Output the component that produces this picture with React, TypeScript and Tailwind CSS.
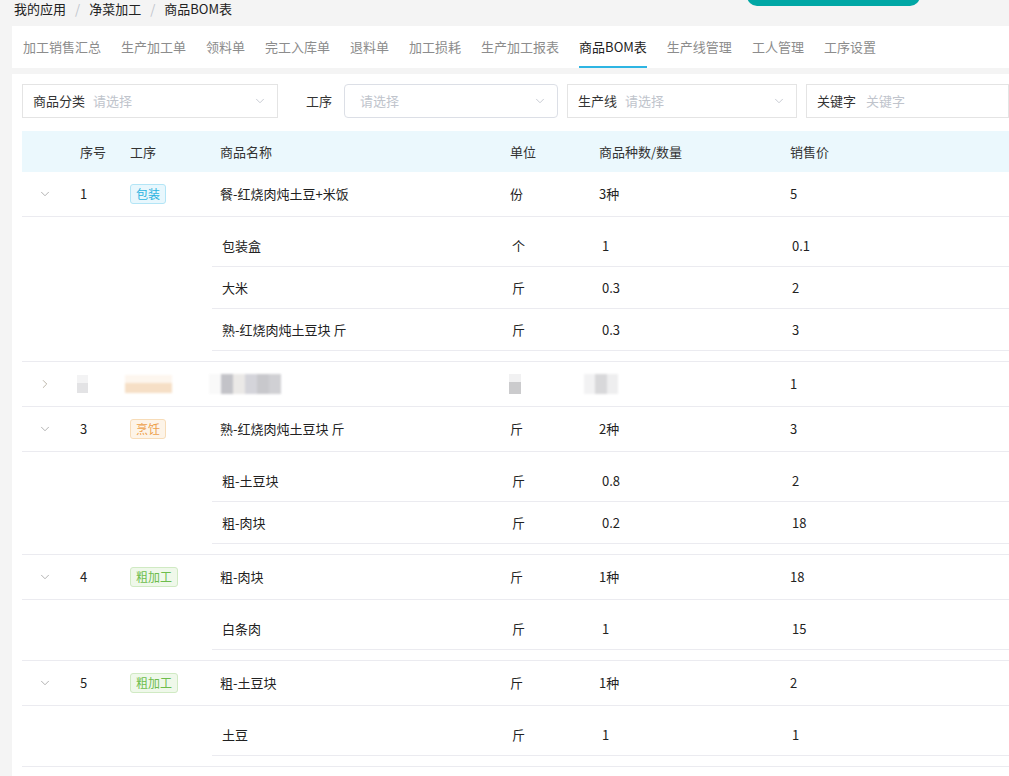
import { ChevronDown, ChevronRight } from 'lucide-react';

const TABS = ['加工销售汇总', '生产加工单', '领料单', '完工入库单', '退料单', '加工损耗', '生产加工报表', '商品BOM表', '生产线管理', '工人管理', '工序设置'];

type Sub = { name: string; unit: string; qty: string; price: string };
type Row = { no: string; tag: 'pack' | 'cook' | 'rough'; tagText: string; name: string; unit: string; kinds: string; price: string; subs: Sub[] };

const TAG_CLASS = {
  pack: 'bg-[#e8f7fd] border-[#b3e5f6] text-[#2bb3e0]',
  cook: 'bg-[#fdf4e8] border-[#f7dcb8] text-[#eda04a]',
  rough: 'bg-[#eff8ea] border-[#d0eac3] text-[#6dbd4c]',
};

const ROWS: Row[] = [
  {
    no: '1', tag: 'pack', tagText: '包装', name: '餐-红烧肉炖土豆+米饭', unit: '份', kinds: '3种', price: '5',
    subs: [
      { name: '包装盒', unit: '个', qty: '1', price: '0.1' },
      { name: '大米', unit: '斤', qty: '0.3', price: '2' },
      { name: '熟-红烧肉炖土豆块 斤', unit: '斤', qty: '0.3', price: '3' },
    ],
  },
  {
    no: '3', tag: 'cook', tagText: '烹饪', name: '熟-红烧肉炖土豆块 斤', unit: '斤', kinds: '2种', price: '3',
    subs: [
      { name: '粗-土豆块', unit: '斤', qty: '0.8', price: '2' },
      { name: '粗-肉块', unit: '斤', qty: '0.2', price: '18' },
    ],
  },
  {
    no: '4', tag: 'rough', tagText: '粗加工', name: '粗-肉块', unit: '斤', kinds: '1种', price: '18',
    subs: [{ name: '白条肉', unit: '斤', qty: '1', price: '15' }],
  },
  {
    no: '5', tag: 'rough', tagText: '粗加工', name: '粗-土豆块', unit: '斤', kinds: '1种', price: '2',
    subs: [{ name: '土豆', unit: '斤', qty: '1', price: '1' }],
  },
];

const COLS = 'grid grid-cols-[58px_50px_90px_290px_89px_191px_1fr] items-center';

function Select({ label, width }: { label: string; width: string }) {
  return (
    <div className={`${width} h-[34px] border border-[#e4e4e4] flex items-center px-[10px] gap-[8px]`}>
      <span className="text-[#333]">{label}</span>
      <span className="text-[#c0c4cc] flex-1">请选择</span>
      <ChevronDown className="w-[14px] h-[14px] text-[#c0c4cc]" strokeWidth={1.5} />
    </div>
  );
}

function MainRow({ r }: { r: Row }) {
  return (
    <div className={`${COLS} h-[45px] border-b border-[#ebebf0]`}>
      <div className="pl-[16px]">
        <ChevronDown className="w-[14px] h-[14px] text-[#9a9a9a]" strokeWidth={1.3} />
      </div>
      <div>{r.no}</div>
      <div>
        <span className={`inline-block h-[20px] leading-[18px] px-[5px] text-[12px] border rounded-[3px] ${TAG_CLASS[r.tag]}`}>{r.tagText}</span>
      </div>
      <div>{r.name}</div>
      <div>{r.unit}</div>
      <div>{r.kinds}</div>
      <div>{r.price}</div>
    </div>
  );
}

function SubRows({ subs }: { subs: Sub[] }) {
  return (
    <div className="pt-[8px] pb-[10px] border-b border-[#ebebf0]">
      {subs.map((s) => (
        <div key={s.name} className="ml-[190px] grid grid-cols-[290px_90px_190px_1fr] items-center h-[42px] border-b border-[#ebebf0] pl-[10px] pt-[1px]">
          <div>{s.name}</div>
          <div>{s.unit}</div>
          <div>{s.qty}</div>
          <div>{s.price}</div>
        </div>
      ))}
    </div>
  );
}

function BlurRow() {
  return (
    <div className={`${COLS} h-[45px] border-b border-[#ebebf0]`}>
      <div className="pl-[16px]">
        <ChevronRight className="w-[14px] h-[14px] text-[#a8a090]" strokeWidth={1.3} />
      </div>
      <div className="-ml-[3px]">
        <div className="w-[11px] h-[18px] flex flex-col blur-[0.6px]">
          <div className="h-[8px] bg-[#f3f3f4]" />
          <div className="h-[10px] bg-[#e3e3e5]" />
        </div>
      </div>
      <div className="-ml-[5px]">
        <div className="w-[47px] h-[18px] flex flex-col blur-[1px]">
          <div className="h-[8px] bg-[#fdf6ee]" />
          <div className="h-[10px] bg-[#f6dfc6]" />
        </div>
      </div>
      <div className="-ml-[11px] flex">
        <div className="h-[20px] w-[72px] flex blur-[0.8px]">
          <div className="w-[12px] bg-[#f9f9f9]" />
          <div className="w-[12px] bg-[#c3c3c8]" />
          <div className="w-[12px] bg-[#ebe9e7]" />
          <div className="w-[12px] bg-[#d4d4da]" />
          <div className="w-[12px] bg-[#c8c8cc]" />
          <div className="w-[12px] bg-[#d0d0d4]" />
        </div>
      </div>
      <div className="-ml-[1px]">
        <div className="w-[12px] h-[20px] flex flex-col blur-[0.6px]">
          <div className="h-[8px] bg-[#f1f1f2]" />
          <div className="h-[12px] bg-[#cbcbcd]" />
        </div>
      </div>
      <div className="-ml-[15px]">
        <div className="w-[34px] h-[20px] flex blur-[0.8px]">
          <div className="w-[11px] bg-[#f2f2f3]" />
          <div className="w-[12px] bg-[#d8d8da]" />
          <div className="w-[11px] bg-[#eeeeef]" />
        </div>
      </div>
      <div>1</div>
    </div>
  );
}

export default function App() {
  return (
    <div className="relative min-h-[776px] bg-[#f4f4f4] text-[13px] text-[#222] font-['Microsoft_YaHei','Noto_Sans_CJK_SC',sans-serif] overflow-hidden">
      {/* top action button, scrolled mostly out of view */}
      <div className="absolute left-[747px] top-[-20px] w-[173px] h-[26px] rounded-[10px] bg-[#00a7a5]" />

      <div className="h-[26px] pl-[14px] flex items-start leading-[17px]">
        <span className="text-[#222]">我的应用</span>
        <span className="mx-[9px] text-[#c0c4cc]">/</span>
        <span className="text-[#222]">净菜加工</span>
        <span className="mx-[9px] text-[#c0c4cc]">/</span>
        <span className="text-[#222]">商品BOM表</span>
      </div>

      <div className="ml-[12px] bg-white h-[42px] flex items-stretch pl-[11px] gap-[20px]">
        {TABS.map((t) => (
          <div key={t} className={`flex items-center border-b-2 ${t === '商品BOM表' ? 'border-[#2db5e3] text-[#222]' : 'border-transparent text-[#8c8c8c]'}`}>
            <span className="pt-[2px]">{t}</span>
          </div>
        ))}
      </div>

      <div className="ml-[12px] mt-[6px] bg-white pl-[10px] pt-[10px] min-h-[710px]">
        <div className="flex items-center">
          <Select label="商品分类" width="w-[256px]" />
          <span className="ml-[28px] text-[#333]">工序</span>
          <div className="ml-[12px] w-[214px] h-[34px] border border-[#dcdfe6] rounded-[4px] flex items-center pl-[15px] pr-[10px]">
            <span className="text-[#c0c4cc] flex-1">请选择</span>
            <ChevronDown className="w-[14px] h-[14px] text-[#c0c4cc]" strokeWidth={1.5} />
          </div>
          <div className="ml-[9px]">
            <Select label="生产线" width="w-[230px]" />
          </div>
          <div className="ml-[9px] w-[203px] h-[34px] border border-[#e4e4e4] flex items-center px-[10px] gap-[10px]">
            <span className="text-[#333]">关键字</span>
            <span className="text-[#c0c4cc]">关键字</span>
          </div>
        </div>

        <div className="mt-[13px]">
          <div className={`${COLS} h-[41px] bg-[#ebf8fd] text-[#333]`}>
            <div />
            <div>序号</div>
            <div>工序</div>
            <div>商品名称</div>
            <div>单位</div>
            <div>商品种数/数量</div>
            <div>销售价</div>
          </div>

          <MainRow r={ROWS[0]} />
          <SubRows subs={ROWS[0].subs} />
          <BlurRow />
          {ROWS.slice(1).map((r) => (
            <div key={r.no}>
              <MainRow r={r} />
              <SubRows subs={r.subs} />
            </div>
          ))}
        </div>
      </div>
    </div>
  );
}
